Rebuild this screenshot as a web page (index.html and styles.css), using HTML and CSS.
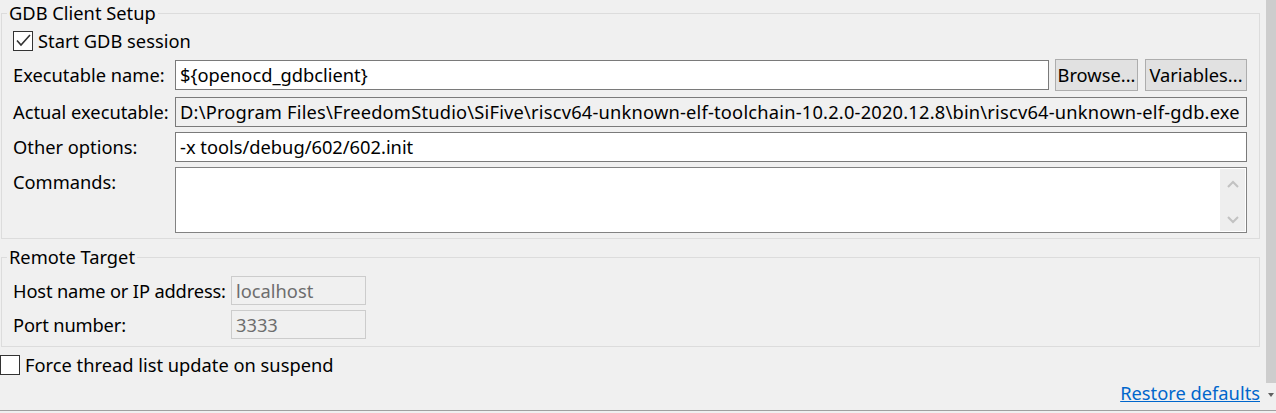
FILE: index.html
```html
<!DOCTYPE html>
<html>
<head>
<meta charset="utf-8">
<link rel="stylesheet" href="styles.css">
</head>
<body>
<div class="window">
  <div class="top">
    <div class="main">
      <fieldset class="group group-gdb">
        <legend>GDB Client Setup</legend>
        <div class="check-row check-row-start">
          <span class="checkbox"><svg width="18" height="18" viewBox="0 0 18 18"><path d="M3 8.5 L7 13 L16 3" fill="none" stroke="#333" stroke-width="1.6"/></svg></span>
          <span class="check-text">Start GDB session</span>
        </div>
        <div class="form-row row-exe">
          <span class="label">Executable name:</span>
          <div class="field">${openocd_gdbclient}</div>
          <button class="btn btn-browse">Browse...</button>
          <button class="btn btn-vars">Variables...</button>
        </div>
        <div class="form-row row-actual">
          <span class="label">Actual executable:</span>
          <div class="field field-readonly">D:\Program Files\FreedomStudio\SiFive\riscv64-unknown-elf-toolchain-10.2.0-2020.12.8\bin\riscv64-unknown-elf-gdb.exe</div>
        </div>
        <div class="form-row row-options">
          <span class="label">Other options:</span>
          <div class="field">-x tools/debug/602/602.init</div>
        </div>
        <div class="form-row row-commands">
          <span class="label label-top">Commands:</span>
          <div class="textarea">
            <div class="textarea-body"></div>
            <div class="textarea-scroll">
              <svg width="12" height="8" viewBox="0 0 12 8"><path d="M1 7 L6 2 L11 7" fill="none" stroke="#c2c2c2" stroke-width="2"/></svg>
              <svg width="12" height="8" viewBox="0 0 12 8"><path d="M1 1 L6 6 L11 1" fill="none" stroke="#c2c2c2" stroke-width="2"/></svg>
            </div>
          </div>
        </div>
      </fieldset>
      <fieldset class="group group-remote">
        <legend>Remote Target</legend>
        <div class="form-row row-host">
          <span class="label label-remote">Host name or IP address:</span>
          <div class="field field-disabled">localhost</div>
        </div>
        <div class="form-row row-port">
          <span class="label label-remote">Port number:</span>
          <div class="field field-disabled">3333</div>
        </div>
      </fieldset>
      <div class="check-row check-row-force">
        <span class="checkbox"></span>
        <span class="check-text">Force thread list update on suspend</span>
      </div>
      <div class="footer">
        <a class="link" href="#">Restore defaults</a>
      </div>
    </div>
    <div class="vscroll">
      <div class="vscroll-thumb"></div>
      <div class="vscroll-rest"><span class="vscroll-arrow"></span></div>
    </div>
  </div>
  <div class="hline"></div>
</div>
</body>
</html>
```

FILE: styles.css
```css
html, body {
  margin: 0;
  padding: 0;
  background: #f0f0f0;
}
body {
  width: 1276px;
  height: 413px;
  overflow: hidden;
  font-family: "Noto Sans", "Liberation Sans", sans-serif;
  font-size: 18.3px;
  line-height: 20px;
  color: #000;
}
.window {
  display: flex;
  flex-direction: column;
  height: 413px;
}
.top {
  display: flex;
  height: 410px;
}
.main {
  width: 1266px;
  padding-top: 3px;
  display: flex;
  flex-direction: column;
}
.group {
  margin: 0 6px 0 1px;
  border: 1px solid #dcdcdc;
  padding: 0 12px 5px 11px;
  min-width: 0;
}
.group legend {
  padding: 0 2px;
  margin-left: -6px;
  line-height: 20px;
  height: 20px;
}
.check-row {
  display: flex;
  align-items: center;
  height: 20px;
}
.check-row-start {
  margin-top: 8px;
}
.checkbox {
  box-sizing: border-box;
  width: 20px;
  height: 20px;
  border: 1px solid #333;
  background: #fff;
  display: flex;
  align-items: center;
  justify-content: center;
  flex: none;
}
.check-text {
  margin-left: 5px;
}
.form-row {
  display: flex;
  align-items: center;
}
.label {
  width: 162px;
  flex: none;
  white-space: nowrap;
}
.label-remote {
  width: 218px;
  letter-spacing: -0.15px;
}
.label-top {
  align-self: flex-start;
  padding-top: 5px;
}
.field {
  box-sizing: border-box;
  flex: 1;
  height: 30px;
  border: 1px solid #7a7a7a;
  background: #fff;
  padding: 0 4px;
  line-height: 28px;
  white-space: nowrap;
  overflow: hidden;
}
.field-readonly {
  background: #f0f0f0;
  letter-spacing: 0.2px;
}
.field-disabled {
  flex: none;
  width: 135px;
  height: 29px;
  line-height: 27px;
  background: #f0f0f0;
  border-color: #cccccc;
  color: #6d6d6d;
}
.row-exe {
  margin-top: 8px;
  height: 32px;
}
.btn {
  box-sizing: border-box;
  height: 32px;
  border: 1px solid #adadad;
  background: #e1e1e1;
  font: inherit;
  color: #000;
  padding: 0;
  margin: 0;
  flex: none;
}
.btn-browse {
  width: 83px;
  margin-left: 6px;
}
.btn-vars {
  width: 102px;
  margin-left: 7px;
}
.row-actual {
  margin-top: 6px;
}
.row-options {
  margin-top: 5px;
}
.row-commands {
  margin-top: 5px;
}
.textarea {
  box-sizing: border-box;
  flex: 1;
  height: 66px;
  border: 1px solid #828282;
  background: #fff;
  display: flex;
}
.textarea-body {
  flex: 1;
}
.textarea-scroll {
  width: 25px;
  margin: 1px 1px 1px 0;
  background: #eeeeee;
  display: flex;
  flex-direction: column;
  justify-content: space-between;
  align-items: center;
  padding: 11px 0 7px;
}
.group-remote {
  margin-top: 8px;
  padding-bottom: 7px;
}
.row-host {
  margin-top: 9px;
}
.row-port {
  margin-top: 5px;
}
.check-row-force {
  margin-top: 8px;
}
.footer {
  margin-top: auto;
  display: flex;
  justify-content: flex-end;
  padding: 0 6px 7px 0;
}
.link {
  color: #0066cc;
  text-decoration: underline;
}
.vscroll {
  width: 10px;
  display: flex;
  flex-direction: column;
}
.vscroll-thumb {
  height: 383px;
  background: #cdcdcd;
}
.vscroll-rest {
  flex: 1;
  display: flex;
  justify-content: center;
  padding-top: 10px;
}
.vscroll-arrow {
  width: 0;
  height: 0;
  border-left: 3px solid transparent;
  border-right: 3px solid transparent;
  border-top: 4px solid #606060;
}
.hline {
  height: 1px;
  background: #a0a0a0;
}
```
